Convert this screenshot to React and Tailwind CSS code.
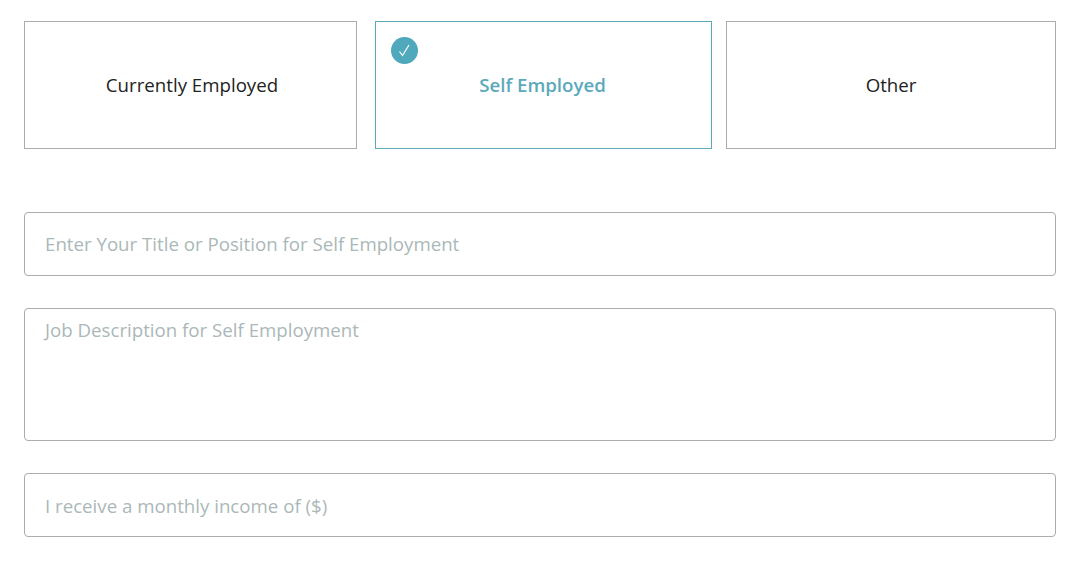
import React from "react";

const Card = ({ className, selected, children }) => (
  <div
    className={`relative flex h-[128px] items-center justify-center border text-[18.68px] ${className} ${
      selected ? "border-[#5ca9ba] pr-[2px] font-semibold text-[#5ba9bb]" : "border-[#a9adad] text-[#222]"
    }`}
  >
    {selected && (
      <span className="absolute left-[15px] top-[15px] flex h-[27px] w-[27px] items-center justify-center rounded-full bg-[#4fa8bb]">
        <svg width="13" height="13" viewBox="0 0 13 13" fill="none" stroke="#fff" strokeWidth="1.2">
          <path d="M1.5 7.5l3 4L11 1" />
        </svg>
      </span>
    )}
    {children}
  </div>
);

export default function App() {
  return (
    <div className="h-[563px] w-[1088px] overflow-hidden bg-white pl-6 pt-[21px] font-['Open_Sans',sans-serif]">
      <div className="flex w-[1032px]">
        <Card className="w-[333px] pl-[3px]">Currently Employed</Card>
        <Card className="ml-[18px] w-[337px]" selected>Self Employed</Card>
        <Card className="ml-[14px] w-[330px]">Other</Card>
      </div>
      <div className="mt-[63px] flex w-[1032px] flex-col gap-[32px] text-[18.68px] text-[#abb8b8]">
        <div className="flex h-[64px] items-center rounded border border-[#a9adad] px-[20px]">Enter Your Title or Position for Self Employment</div>
        <div className="h-[133px] rounded border border-[#a9adad] px-[20px] pt-[7px]">Job Description for Self Employment</div>
        <div className="flex h-[64px] items-center rounded border border-[#a9adad] px-[20px] pt-[2px]">I receive a monthly income of ($)</div>
      </div>
    </div>
  );
}
